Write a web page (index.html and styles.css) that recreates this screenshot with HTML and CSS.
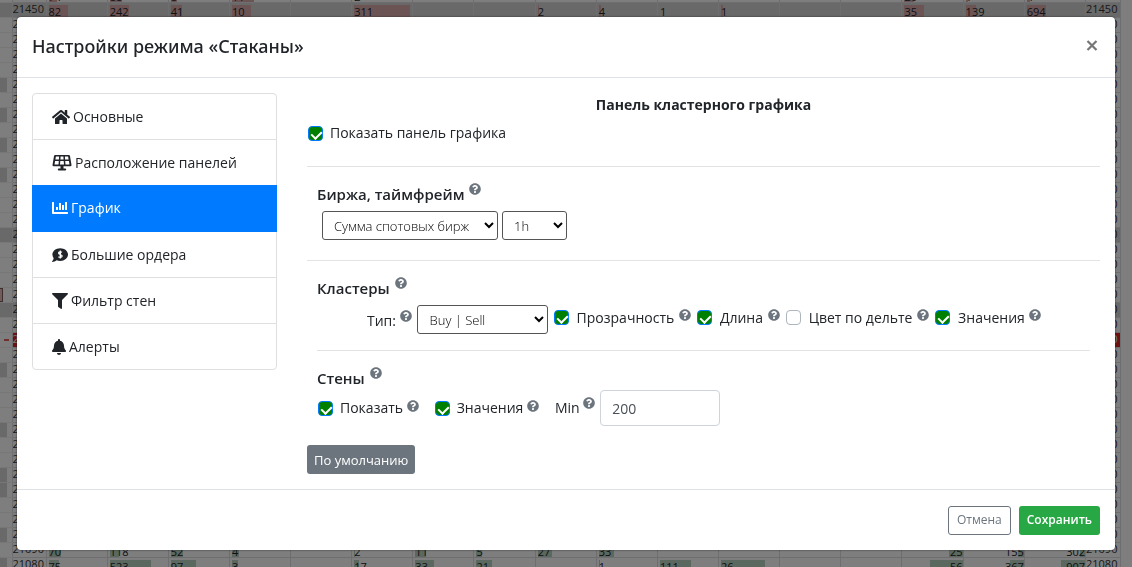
FILE: index.html
```html
<!DOCTYPE html>
<html lang="ru">
<head>
<meta charset="utf-8">
<title>Настройки режима «Стаканы»</title>
<link rel="stylesheet" href="styles.css">
</head>
<body>
<svg class="sprite" aria-hidden="true">
  <symbol id="i-help" viewBox="0 0 512 512"><path d="M504 256c0 137-111 248-248 248S8 393 8 256 119 8 256 8s248 111 248 248zM262.700 90c-54.500 0-89.300 23-116.500 63.800-3.500 5.300-2.400 12.400 2.700 16.300l34.700 26.300c5.200 3.900 12.600 3 16.700-2.100 17.900-22.700 30.100-35.800 57.300-35.800 20.400 0 45.700 13.100 45.700 33 0 15-12.400 22.700-32.500 34C247.100 238.500 216 254.900 216 296v4c0 6.600 5.400 12 12 12h56c6.600 0 12-5.400 12-12v-1.300c0-28.500 83.200-29.600 83.200-106.700 0-58-60.200-102-116.500-102zM256 338c-25.400 0-46 20.600-46 46s20.600 46 46 46 46-20.600 46-46-20.600-46-46-46z"/></symbol>
</svg>

<div class="ladder" aria-hidden="true"><table class="ladder-table"><colgroup><col class="col-strip"><col class="col-left"><col span="17"><col class="col-right"></colgroup><tbody id="ladder-rows"></tbody></table></div>

<div class="backdrop">
<form class="modal" role="dialog" aria-labelledby="modal-title">
  <header class="modal-header">
    <h1 class="modal-title" id="modal-title">Настройки режима «Стаканы»</h1>
    <button class="close" type="button" aria-label="Закрыть"><svg viewBox="0 0 12 12"><path d="M1.500 1l9 9M10.500 1l-9 9" stroke="currentColor" stroke-width="2.200"/></svg></button>
  </header>

  <div class="modal-body">
    <nav class="tabs">
      <a class="tab" href="#main"><svg class="icon w18" viewBox="0 0 576 512"><path d="M280.400 148.300L96 300.100V464a16 16 0 0 0 16 16l112.100-.3a16 16 0 0 0 15.900-16V368a16 16 0 0 1 16-16h64a16 16 0 0 1 16 16v95.600a16 16 0 0 0 16 16.100L464 480a16 16 0 0 0 16-16V300L295.700 148.300a12.200 12.200 0 0 0-15.300 0zM571.600 251.500L488 182.600V44.100a12 12 0 0 0-12-12h-56a12 12 0 0 0-12 12v72.600L318.500 43a48 48 0 0 0-61 0L4.300 251.500a12 12 0 0 0-1.600 16.900l25.500 31a12 12 0 0 0 16.900 1.600l235.200-193.700a12.200 12.200 0 0 1 15.300 0L530.900 301a12 12 0 0 0 16.900-1.600l25.500-31a12 12 0 0 0-1.700-16.900z"/></svg>Основные</a>
      <a class="tab" href="#panels"><svg class="icon w20" viewBox="0 0 20 16"><path fill-rule="evenodd" d="M3.200 0h13.600q1 0 1.200 1l1.500 9q.1 1.200-1.100 1.200H11.500v2.300h1.700q1 0 1 1t-1 1H6.800q-1 0-1-1t1-1h1.700v-2.300H1.600Q.4 11.200.5 10L2 1q.2-1 1.200-1zM3.900 1.600l-.5 2.800h3.500l.2-2.800zM8.600 1.600l-.2 2.800h3.200l-.2-2.800zM12.900 1.600l.2 2.800h3.500l-.5-2.800zM3.100 5.900l-.6 3.700h4l.3-3.700zM8.300 5.900L8 9.600h4l-.3-3.700zM13.200 5.900l.3 3.700h4l-.6-3.700z"/></svg>Расположение панелей</a>
      <a class="tab active" href="#chart" aria-current="page"><svg class="icon w16" viewBox="0 0 512 512"><path d="M332.800 320h38.400c6.400 0 12.800-6.400 12.800-12.800V172.800c0-6.400-6.400-12.800-12.800-12.800h-38.400c-6.400 0-12.800 6.400-12.800 12.800v134.400c0 6.400 6.400 12.800 12.800 12.800zm96 0h38.400c6.400 0 12.800-6.400 12.800-12.800V76.800c0-6.400-6.400-12.800-12.800-12.800h-38.400c-6.400 0-12.800 6.400-12.800 12.800v230.400c0 6.400 6.400 12.800 12.800 12.800zm-288 0h38.400c6.400 0 12.800-6.400 12.800-12.800v-70.400c0-6.400-6.400-12.800-12.800-12.800h-38.400c-6.400 0-12.800 6.400-12.800 12.800v70.400c0 6.400 6.400 12.800 12.800 12.800zm96 0h38.400c6.400 0 12.800-6.400 12.800-12.800V108.800c0-6.400-6.400-12.800-12.800-12.800h-38.400c-6.400 0-12.800 6.400-12.800 12.800v198.400c0 6.400 6.400 12.800 12.800 12.800zM496 384H64V80c0-8.800-7.200-16-16-16H16C7.200 64 0 71.200 0 80v336c0 17.700 14.300 32 32 32h464c8.800 0 16-7.200 16-16v-32c0-8.800-7.200-16-16-16z"/></svg>График</a>
      <a class="tab" href="#orders"><svg class="icon w16" viewBox="0 0 16 16"><path d="M8.200 1.200C12.600 1.200 16 4 16 7.600S12.600 14 8.200 14c-1.300 0-2.500-.2-3.600-.7C3.300 14.300 1.800 15 .3 15q-.5-.3-.1-.8C1 13.300 1.500 12.300 1.700 11.200A6 6 0 0 1 .4 7.600C.4 4 3.900 1.200 8.200 1.200z"/><path d="M10 5.300C9.200 4.700 6.600 4.400 6.600 6c0 1.700 3.500 1.300 3.500 3.100 0 1.600-2.500 1.500-3.700.6M8.300 3.500v8" fill="none" stroke="#fff" stroke-width="1.300"/></svg>Большие ордера</a>
      <a class="tab" href="#filter"><svg class="icon w16" viewBox="0 0 512 512"><path d="M488 0H24C2.700 0-8 25.900 7.100 41L192 225.900V432c0 7.800 3.800 15.200 10.200 19.700l80 56C298 518.700 320 507.500 320 488V225.900L505 41C520 25.900 509.300 0 488 0z"/></svg>Фильтр стен</a>
      <a class="tab" href="#alerts"><svg class="icon w14" viewBox="0 0 448 512"><path d="M224 512c35.300 0 64-28.700 64-64H160c0 35.300 28.700 64 64 64zm215.400-149.700c-19.300-20.800-55.500-52-55.500-154.300 0-77.700-54.500-139.900-127.900-155.200V32c0-17.700-14.300-32-32-32s-32 14.300-32 32v20.800C118.600 68.100 64.100 130.300 64.100 208c0 102.300-36.200 133.500-55.500 154.300A31.300 31.300 0 0 0 0 384c.1 16.400 13 32 32.100 32h383.800c19.100 0 32-15.600 32.100-32a31.300 31.300 0 0 0-8.600-21.700z"/></svg>Алерты</a>
    </nav>

    <section class="content">
      <h2 class="content-title">Панель кластерного графика</h2>
      <label class="check"><input type="checkbox" checked>Показать панель графика</label>

      <div class="group">
        <h3 class="group-title">Биржа, таймфрейм <svg class="help"><use href="#i-help"/></svg></h3>
        <div class="row exchange">
          <select class="select exchange-select" aria-label="Биржа"><option>Сумма спотовых бирж</option></select>
          <select class="select frame-select" aria-label="Таймфрейм"><option>1h</option></select>
        </div>
      </div>

      <div class="group">
        <h3 class="group-title">Кластеры <svg class="help"><use href="#i-help"/></svg></h3>
        <div class="row clusters">
          <label class="type-label" for="type">Тип: <svg class="help"><use href="#i-help"/></svg></label>
          <select class="select type-select" id="type"><option>Buy | Sell</option></select>
          <label class="check"><input type="checkbox" checked>Прозрачность <svg class="help"><use href="#i-help"/></svg></label>
          <label class="check"><input type="checkbox" checked>Длина <svg class="help"><use href="#i-help"/></svg></label>
          <label class="check"><input type="checkbox">Цвет по дельте <svg class="help"><use href="#i-help"/></svg></label>
          <label class="check"><input type="checkbox" checked>Значения <svg class="help"><use href="#i-help"/></svg></label>
        </div>
        <div class="walls">
          <h3 class="group-title">Стены <svg class="help"><use href="#i-help"/></svg></h3>
          <div class="row walls-row">
            <label class="check"><input type="checkbox" checked>Показать <svg class="help"><use href="#i-help"/></svg></label>
            <label class="check"><input type="checkbox" checked>Значения <svg class="help"><use href="#i-help"/></svg></label>
            <div class="min"><label class="min-label" for="min">Min <svg class="help"><use href="#i-help"/></svg></label><input class="text-input" id="min" type="text" value="200"></div>
          </div>
        </div>
      </div>
      <button class="btn btn-gray" type="button">По умолчанию</button>
    </section>
  </div>

  <footer class="modal-footer">
    <button class="btn btn-outline" type="button">Отмена</button>
    <button class="btn btn-green" type="submit">Сохранить</button>
  </footer>
</form>
</div>
<script src="ladder.js"></script>
</body>
</html>
```
FILE: styles.css
```css
* { box-sizing: border-box; }
body {
  margin: 0;
  min-height: 100vh;
  background: #fcfcfc;
  color: #212529;
  font: 400 14px/24px "Open Sans", "Noto Sans", sans-serif;
}
h1, h2, h3 { margin: 0; }
button, select, input { font-family: inherit; }
.sprite { display: none; }

/* Price ladder behind the dialog */
.ladder { position: fixed; inset: 0; overflow: hidden; padding-right: 11px; background: #fcfcfc; }
.ladder-table {
  width: 100%;
  margin-top: -13px;
  border-collapse: collapse;
  table-layout: fixed;
  font: 400 11px/14px "Open Sans", "Noto Sans", sans-serif;
}
.col-strip { width: 12px; }
.col-left { width: 34px; }
.col-right { width: 35px; }
.ladder-table td { height: 15px; padding: 0; border: 1px solid #dcdce0; white-space: nowrap; overflow: hidden; }
.ladder-table .price { padding: 0 0 2px; line-height: 12px; color: #333; }
.ladder-table .strip { border-left: 0; border-top-color: #eee; border-bottom-color: #eee; }
.strip-fill { display: block; width: 7px; height: 14px; background: #d2d2d2; }
.strip-mark { display: block; width: 3px; height: 14px; border: solid #7d5a5a; border-width: 1px 1px 1px 0; background: #e3b6b6; }
.strip-dash { display: block; width: 5px; height: 2px; margin-left: 4px; background: #e06060; }
.ladder-table .round td { background: #d2d2d2; }
.ladder-table .current .price { background: #d22; color: #fff; }
.bar { display: block; height: 12px; margin: 2px 2px 0; background-repeat: no-repeat; line-height: 14px; }
.bar.ask { background-image: linear-gradient(#d8a8aa, #d8a8aa); }
.bar.bid { background-image: linear-gradient(#b4d0be, #b4d0be); }
.bar.right { text-align: right; margin-right: 0; background-position: right; }

/* Dialog */
.backdrop { position: relative; min-height: 100vh; padding: 17px; background: rgba(0, 0, 0, 0.5); }
.modal { background: #fff; border-radius: 4px; box-shadow: 0 0 2px #222; }
.modal-header { display: flex; align-items: center; justify-content: space-between; height: 61px; padding: 0 15px 2px; border-bottom: 1px solid #dee2e6; }
.modal-title { font-family: "Noto Sans", sans-serif; font-size: 18px; font-weight: 500; }
.close { display: flex; padding: 2px; margin: 0; border: 0; background: none; color: #777; }
.close svg { width: 12px; height: 12px; }
.modal-body { display: flex; align-items: flex-start; gap: 30px; padding: 15px; }

.tabs { flex: 0 0 245px; border: 1px solid #dfdfdf; border-radius: 4px; }
.tab { display: flex; align-items: center; gap: 3px; height: 46px; padding: 0 19px; border-bottom: 1px solid #dfdfdf; color: #212529; text-decoration: none; }
.tab:last-child { height: 45px; border-bottom: 0; }
.tab.active { margin: -1px -1px 0; height: 47px; padding: 0 20px; border-color: #007bff; background: #007bff; color: #fff; }
.icon { height: 16px; fill: currentColor; }
.w14 { width: 14px; }
.w16 { width: 16px; }
.w18 { width: 18px; }
.w20 { width: 20px; }

.content { flex: 1; min-width: 0; }
.content-title { font-size: 14px; font-weight: 700; line-height: 24px; text-align: center; }
.content > .check { margin-top: 4px; padding-left: 1px; }
.check { display: flex; align-items: center; white-space: pre; }
.check input {
  appearance: none;
  position: relative;
  flex: none;
  width: 15px;
  height: 15px;
  margin: 0 7px 0 0;
  border: 1px solid #adb5bd;
  border-radius: 4px;
  background: #fff;
}
.check input:checked { border-color: #007bff; background: #008000; }
.check input:checked::before {
  content: "";
  position: absolute;
  left: 4px;
  top: 2px;
  width: 5px;
  height: 8px;
  border: solid #fff;
  border-width: 0 2px 2px 0;
  transform: rotate(45deg);
}
.group { margin-top: 21px; padding: 15px 10px 0; border-top: 1px solid #e3e3e3; }
.group + .group { margin-top: 20px; }
.group-title { font-size: 15px; font-weight: 600; line-height: 24px; }
.help { width: 12px; height: 12px; fill: #6c757d; vertical-align: 4px; }
.check .help { margin-bottom: 5px; }
.group-title .help { margin-left: 1px; vertical-align: 5px; }
.row { display: flex; align-items: center; }
.exchange { gap: 4px; padding: 5px 5px 0; }
.select { height: 29px; padding: 0 0 0 7px; border: 1px solid #555; border-radius: 3px; background: #fff; color: #000; font-size: 13px; font-weight: 300; }
.exchange-select { width: 176px; }
.frame-select { width: 65px; }
.clusters { flex-wrap: wrap; gap: 0 6px; padding: 5px 0 16px; }
.clusters .check { padding-bottom: 4px; }
.clusters .check input { margin-right: 8px; }
.clusters .check .help { margin-left: 1px; }
.type-label { padding: 2px 0 0 50px; margin-right: -1px; white-space: nowrap; }
.type-select { width: 131px; padding-left: 8px; }
.walls { padding-top: 15px; border-top: 1px solid #e3e3e3; }
.walls-row { gap: 16px; padding-left: 1px; }
.min { display: flex; align-items: center; gap: 5px; }
.text-input { width: 120px; height: 36px; padding: 0 11px; border: 1px solid #ced4da; border-radius: 4px; color: #495057; font-size: 14px; font-weight: 400; }

.btn { height: 29px; padding: 0 8px; border: 0; border-radius: 3px; color: #fff; font-size: 13px; font-weight: 400; line-height: 20px; }
.btn-gray { display: block; margin-top: 19px; padding: 0 7px; background: #6c757d; }
.btn-outline { border: 1px solid #6c757d; background: #fff; color: #6c757d; font-size: 12px; }
.btn-green { background: #28a745; font-size: 12px; font-weight: 600; }
.modal-footer { display: flex; align-items: center; justify-content: flex-end; gap: 8px; height: 61px; padding: 0 15px; border-top: 1px solid #dee2e6; }
```
FILE: ladder.js
```javascript
// Each cell is [column, volume, bar width in px].
const top1 = 21460;
const cells = {
  21460: [[0, "74", 8], [1, "88", 12], [2, "8", 6], [3, "11", 22], [5, "2", 0], [14, "20", 10], [15, "1", 2], [16, "4", 3]],
  21450: [[0, "82", 19], [1, "242", 19], [2, "41", 11], [3, "10", 19], [5, "311", 60], [8, "2", 1], [9, "4", 2], [10, " 1", 0], [11, "1", 2], [14, "35", 20], [15, "139", 10], [16, "694", 19]],
  21090: [[0, "70", 12], [1, "118", 9], [2, "52", 12], [3, "4", 7], [5, "2", 1], [6, "11", 11], [7, "5", 6], [8, "27", 14], [9, "33", 15], [14, "25", 14], [15, "155", 6], [16, "302", 5]],
  21080: [[0, "75", 10], [1, "523", 41], [2, "97", 25], [3, "3", 6], [5, "17", 5], [6, "33", 19], [7, "21", 16], [9, "1", 1], [10, "111", 31], [11, "26", 44], [14, "56", 33], [15, "367", 14], [16, "907", 24]]
};
const filled = [5, 7, 9, 11, 15, 24, 28, 31, 32, 35, 37];
const round = [0, 15, 20];
let html = "";
for (let k = -1; k <= 37; k++) {
  const price = top1 - 10 * (k + 1);
  let strip = "";
  if (filled.includes(k)) strip = '<span class="strip-fill"></span>';
  if (k === 19) strip = '<span class="strip-mark"></span>';
  if (k === 22) strip = '<span class="strip-dash"></span>';
  const cls = round.includes(k) ? "round" : k === 22 ? "current" : "";
  html += `<tr class="${cls}"><td class="strip">${strip}</td><td class="price">${price}</td>`;
  for (let c = 0; c < 17; c++) {
    const cell = (cells[price] || []).find(v => v[0] === c);
    if (!cell) { html += "<td></td>"; continue; }
    const side = k < 20 ? "ask" : "bid";
    const align = k > 20 && c > 13 ? "right" : "";
    html += `<td><span class="bar ${side} ${align}" style="background-size:${cell[2]}px 100%">${cell[1]}</span></td>`;
  }
  html += `<td class="price">${price}</td></tr>`;
}
document.getElementById("ladder-rows").innerHTML = html;
```
